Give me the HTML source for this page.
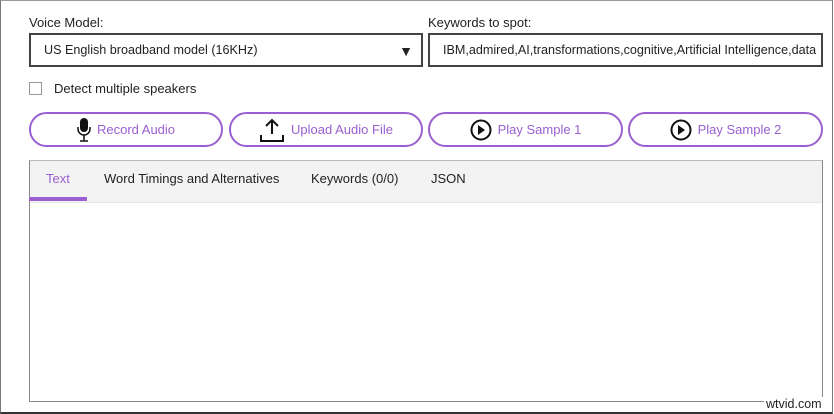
<!DOCTYPE html><html><head><style>
body{margin:0;width:834px;height:414px;position:relative;background:#fff;font-family:"Liberation Sans",sans-serif;font-size:13px;color:#222;overflow:hidden}
.a{position:absolute}
.outer{left:0;top:0;width:831px;height:411px;border:1px solid #777;border-top-color:#999;border-bottom:2px solid #333}
.box{border:2px solid #444;box-sizing:border-box;height:34px;top:33px;line-height:30px;padding-left:13px;white-space:nowrap;overflow:hidden;font-size:12.6px}
.btn{top:112px;height:35px;box-sizing:border-box;border:2px solid #9a5fd0;border-radius:18px;color:#9a5fd0;font-size:13px;display:flex;align-items:center;justify-content:center;gap:6px}
.tab{top:171px;font-size:13px}
</style></head><body>
<div class="a outer"></div>
<div class="a" style="left:29px;top:15px">Voice Model:</div>
<div class="a" style="left:428px;top:15px">Keywords to spot:</div>
<div class="a box" style="left:29px;width:394px">US English broadband model (16KHz)<span class="a" style="right:8px;top:1px;font-size:14px">▼</span></div>
<div class="a box" style="left:428px;width:395px">IBM,admired,AI,transformations,cognitive,Artificial Intelligence,data</div>
<div class="a" style="left:29px;top:82px;width:11px;height:11px;border:1px solid #999"></div>
<div class="a" style="left:54px;top:81px">Detect multiple speakers</div>
<div class="a btn" style="left:29px;width:194px"><svg width="14" height="26" viewBox="0 0 14 26"><rect x="3" y="1" width="8" height="14" rx="4" fill="#111"/><path d="M1 10v2a6 6 0 0 0 12 0v-2M7 18v6M3 24h8" stroke="#111" stroke-width="1.5" fill="none"/></svg>Record Audio</div>
<div class="a btn" style="left:229px;width:194px"><svg width="26" height="26" viewBox="0 0 26 26"><path d="M13 3v14M7 9l6-6 6 6M2 18v6h22v-6" stroke="#111" stroke-width="2" fill="none"/></svg>Upload Audio File</div>
<div class="a btn" style="left:428px;width:195px"><svg width="22" height="22" viewBox="0 0 22 22"><circle cx="11" cy="11" r="9.5" stroke="#111" stroke-width="2" fill="none"/><path d="M8 6l7 5-7 5z" fill="#111"/></svg>Play Sample 1</div>
<div class="a btn" style="left:628px;width:195px"><svg width="22" height="22" viewBox="0 0 22 22"><circle cx="11" cy="11" r="9.5" stroke="#111" stroke-width="2" fill="none"/><path d="M8 6l7 5-7 5z" fill="#111"/></svg>Play Sample 2</div>
<div class="a" style="left:29px;top:160px;width:792px;height:240px;border:1px solid #888;border-top-color:#bbb"></div>
<div class="a" style="left:30px;top:161px;width:792px;height:41px;background:#f3f3f3;border-bottom:1px solid #e6e6e6"></div>
<div class="a" style="left:29px;top:197px;width:58px;height:4px;background:#9a5fd0"></div>
<div class="a tab" style="left:46px;color:#9a5fd0">Text</div>
<div class="a tab" style="left:104px">Word Timings and Alternatives</div>
<div class="a tab" style="left:311px">Keywords (0/0)</div>
<div class="a tab" style="left:431px">JSON</div>
<div class="a" style="left:764px;top:397px;font-size:12.5px;color:#222;background:#fff;padding:0 2px">wtvid.com</div>
</body></html>
